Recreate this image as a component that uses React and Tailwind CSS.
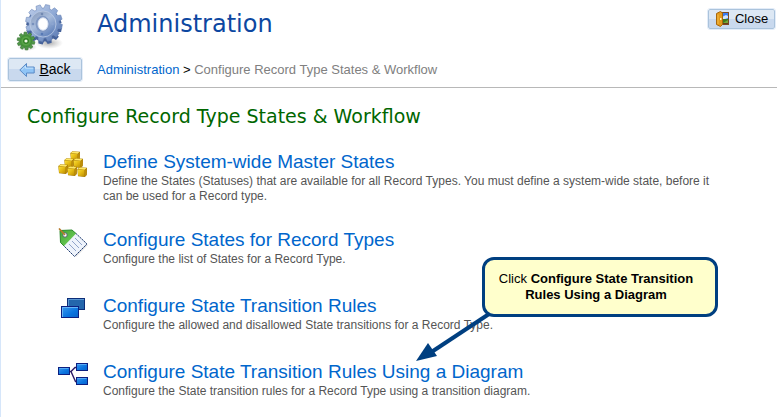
import React from 'react';

// Points of a cog outline, two for each flank of a tooth
const cogPoints = (cx, cy, outer, inner, teeth) => {
    const points = [];
    for (let i = 0; i < teeth; i++) {
        const a = (i * 2 * Math.PI) / teeth;
        const step = (2 * Math.PI) / teeth;
        [[0, inner], [0.15, outer], [0.6, outer], [0.75, inner]].forEach(([t, r]) => {
            points.push(`${(cx + r * Math.cos(a + t * step)).toFixed(1)},${(cy + r * Math.sin(a + t * step)).toFixed(1)}`);
        });
    }
    return points.join(' ');
};

const GearsIcon = () => (
    <svg width="48" height="48" viewBox="0 0 48 48" aria-hidden="true">
        <defs>
            <linearGradient id="gearBlue" x1="0" y1="0" x2="1" y2="1">
                <stop offset="0" stopColor="#c3d2ec" />
                <stop offset="0.5" stopColor="#8fa9d5" />
                <stop offset="1" stopColor="#5373ae" />
            </linearGradient>
            <linearGradient id="gearFace" x1="0" y1="0" x2="0.7" y2="1">
                <stop offset="0" stopColor="#8497b8" />
                <stop offset="0.5" stopColor="#a9bddc" />
                <stop offset="1" stopColor="#5f80ba" />
            </linearGradient>
            <radialGradient id="gearGreen">
                <stop offset="0" stopColor="#8fce74" />
                <stop offset="1" stopColor="#3a8a30" />
            </radialGradient>
            <radialGradient id="gearShadow">
                <stop offset="0" stopColor="#777" stopOpacity="0.6" />
                <stop offset="1" stopColor="#999" stopOpacity="0" />
            </radialGradient>
        </defs>
        <ellipse cx="34" cy="39" rx="14" ry="6" fill="url(#gearShadow)" />
        <ellipse cx="12" cy="43" rx="10" ry="4" fill="url(#gearShadow)" />
        <polygon points={cogPoints(29, 21, 18, 15, 12)} transform="translate(0 1.5)" fill="#46639b" />
        <polygon points={cogPoints(29, 19, 18.5, 15, 12)} fill="url(#gearBlue)" stroke="#7089b8" strokeWidth="0.6" />
        <circle cx="28" cy="20" r="13" fill="url(#gearFace)" stroke="#bccbe5" strokeWidth="0.8" />
        <ellipse cx="27.5" cy="20" rx="7" ry="8.2" fill="#8098c3" />
        <ellipse cx="28" cy="20" rx="5" ry="6.2" fill="#fff" stroke="#dbe4f3" />
        <circle cx="27" cy="10" r="1.3" fill="#7189b2" />
        <circle cx="37.5" cy="20" r="1.3" fill="#8ca5d0" />
        <circle cx="27" cy="30" r="1.3" fill="#5779b5" />
        <circle cx="18" cy="20" r="1.3" fill="#7891bd" />
        <polygon points={cogPoints(11, 37, 9, 6.8, 10)} fill="#51964a" stroke="#35722f" strokeWidth="0.6" />
        <circle cx="11" cy="37" r="6" fill="url(#gearGreen)" />
        <circle cx="11" cy="37" r="3" fill="#318026" />
        <circle cx="11" cy="37" r="1.6" fill="#f2fbe9" />
    </svg>
);

const BackIcon = () => (
    <svg width="16" height="16" viewBox="0 0 16 16" aria-hidden="true">
        <path d="M0.8 8 L7.5 1.5 V5 H15.2 V11 H7.5 V14.5 Z" fill="#8fc4f6" stroke="#5a8ac6" strokeLinejoin="round" />
        <path d="M2.6 8 L6.5 4 V6.2 H14.2" fill="none" stroke="#c4e2fc" />
    </svg>
);

const DoorIcon = () => (
    <svg width="16" height="16" viewBox="0 0 16 16" aria-hidden="true">
        <rect x="6.5" y="1.5" width="7" height="12" fill="#6b3b1a" stroke="#7c4a22" />
        <rect x="7" y="2" width="6" height="6" fill="#3b7df0" />
        <path d="M7 6 L11 4 L13 5 V7 L10 8 H7 Z" fill="#cfe4fb" />
        <rect x="7" y="8" width="6" height="4" fill="#3f7a1d" />
        <path d="M8 12 L13 9 V12 Z" fill="#75a838" />
        <path d="M1.5 2.5 L5.5 0.5 L7.5 2 V13.5 L5.5 15.5 L1.5 13.5 Z" fill="#e39a1b" stroke="#a8670d" />
        <path d="M3 3.5 V13" stroke="#f3bd4d" />
        <rect x="5" y="7" width="1.5" height="2" fill="#fff2c0" />
    </svg>
);

const Cube = ({ x, y }) => (
    <g transform={`translate(${x} ${y})`}>
        <path d="M0.3 2 L2.5 0.3 L10 0.8 L9.8 8 L7.8 10 L1 9.2 Z" fill="#a87c08" />
        <path d="M0.8 2 L2.8 0.6 L9.4 1.1 L7.6 2.7 Z" fill="#ffe866" />
        <path d="M0.6 2.4 L7.5 3 L7.5 9.5 L1.2 8.8 Z" fill="url(#cubeFace)" />
        <path d="M8 3 L9.7 1.5 L9.5 7.8 L8 9.4 Z" fill="#bd8d0a" />
    </g>
);

const CubesIcon = () => (
    <svg width="32" height="32" viewBox="0 0 32 32" aria-hidden="true">
        <defs>
            <linearGradient id="cubeFace" x1="0" y1="0" x2="1" y2="1">
                <stop offset="0" stopColor="#fbe03a" />
                <stop offset="0.5" stopColor="#e3b913" />
                <stop offset="1" stopColor="#bb8c00" />
            </linearGradient>
        </defs>
        <Cube x={13} y={1} />
        <Cube x={7} y={8} />
        <Cube x={16} y={8} />
        <Cube x={1} y={14} />
        <Cube x={10} y={16} />
        <Cube x={20} y={17} />
    </svg>
);

const TagIcon = () => (
    <svg width="32" height="32" viewBox="0 1 32 32" aria-hidden="true">
        <defs>
            <linearGradient id="tagGreen" x1="0" y1="0" x2="1" y2="1">
                <stop offset="0" stopColor="#3fa535" />
                <stop offset="1" stopColor="#79d45d" />
            </linearGradient>
        </defs>
        <path d="M8 20 L19 30 L31 18 L28 16 Z" fill="#000" opacity="0.12" />
        <path d="M3 3.5 L15 3 L30 17 L17.5 29.5 L3.5 15.5 Z" fill="#eef3fb" />
        <path d="M3 3.5 L15 3 L19 6.5 L7 19 L3.5 15.5 Z" fill="url(#tagGreen)" />
        <path d="M7 19 L3.5 15.5 L3 3.5 L15 3 L19 6.5" fill="none" stroke="#2c8a2c" />
        <path d="M19 6.5 L30 17 L17.5 29.5 L7 19" fill="none" stroke="#1f3b70" strokeDasharray="2 0.6" />
        <path d="M12 17 L19 24 M15 14 L22 21 M18 11 L25 18" stroke="#8fa3c9" />
        <circle cx="8" cy="8" r="2.2" fill="#fff" stroke="#55606e" />
        <path d="M2 1.5 L8 8" stroke="#b5782a" strokeWidth="1.6" />
    </svg>
);

const BlueGradient = ({ id }) => (
    <defs>
        <linearGradient id={id} x1="0" y1="0" x2="1" y2="1">
            <stop offset="0" stopColor="#3f9bee" />
            <stop offset="0.6" stopColor="#0a74e0" />
            <stop offset="1" stopColor="#0a62c8" />
        </linearGradient>
    </defs>
);

const WindowsIcon = () => (
    <svg width="32" height="32" viewBox="0 2 32 32" aria-hidden="true">
        <BlueGradient id="windowBlue" />
        <rect x="10.5" y="6.5" width="17" height="11" fill="#2466ac" stroke="#0c2d78" />
        <path d="M11.5 17 V7.5 H27" fill="none" stroke="#5c97d2" />
        <rect x="4.5" y="14.5" width="17" height="11" fill="url(#windowBlue)" stroke="#0c1f80" />
        <path d="M5.5 25 V15.5 H21" fill="none" stroke="#69b4f5" />
    </svg>
);

const DiagramIcon = () => (
    <svg width="32" height="32" viewBox="0 2 32 32" aria-hidden="true">
        <BlueGradient id="nodeBlue" />
        <path d="M12 13.5 H14 L18 9.5 H20 M14 13.5 L18.5 23.5 H20" fill="none" stroke="#2a1a66" strokeWidth="1.4" />
        {[[1.5, 9.5], [19.5, 5.5], [19.5, 19.5]].map(([x, y]) => (
            <g key={`${x}-${y}`}>
                <rect x={x} y={y} width="11" height="7" fill="url(#nodeBlue)" stroke="#0c1f80" />
                <path d={`M${x + 1} ${y + 1} H${x + 10}`} stroke="#58aaf4" />
            </g>
        ))}
    </svg>
);

const items = [
    {
        title: 'Define System-wide Master States',
        text: 'Define the States (Statuses) that are available for all Record Types. You must define a system-wide state, before it can be used for a Record type.',
        Icon: CubesIcon
    },
    {
        title: 'Configure States for Record Types',
        text: 'Configure the list of States for a Record Type.',
        Icon: TagIcon
    },
    {
        title: 'Configure State Transition Rules',
        text: 'Configure the allowed and disallowed State transitions for a Record Type.',
        Icon: WindowsIcon
    },
    {
        title: 'Configure State Transition Rules Using a Diagram',
        text: 'Configure the State transition rules for a Record Type using a transition diagram.',
        Icon: DiagramIcon
    }
];

const buttonStyle = 'flex items-center justify-center rounded-xs border border-[#aac3dc] bg-linear-to-b from-[#dde8f4] from-50% to-[#c9d9ee] to-50% text-black outline outline-[#e3ecf8]';

const Callout = () => (
    <div className="absolute top-[257px] left-[481px] w-[236px]">
        <svg className="absolute top-[54px] -left-[68px]" width="80" height="52" viewBox="0 0 80 52" aria-hidden="true">
            <path d="M75 3 L16 42" stroke="#003f80" strokeWidth="4" />
            <path d="M2 50 L14 32 L23 45 Z" fill="#003f80" />
        </svg>
        <div className="relative rounded-xl border-3 border-[#003f80] bg-[#ffffcc] py-[11px] pr-4 pl-2 text-center text-[13px] leading-4 text-black">
            Click <b>Configure State Transition <br />Rules Using a Diagram</b>
        </div>
    </div>
);

const App = () => {
    return (
        <div className="relative min-h-screen border-l border-[#d6e6fa] bg-white font-['Liberation_Sans',Arial,sans-serif]">
            <header className="mr-0.5 border-b border-[#b8b8b8] pb-1.5">
                <div className="flex h-[58px] items-start pt-1 pr-0.5 pl-3.5">
                    <GearsIcon />
                    <h1 className="ml-[34px] grow pt-1 font-['DejaVu_Sans',Verdana,sans-serif] text-[24px] leading-8 text-[#0d47a1]">Administration</h1>
                    <button type="button" className={`${buttonStyle} mt-[5px] h-5 w-[67px] gap-1 text-[13px]`}>
                        <DoorIcon />
                        Close
                    </button>
                </div>
                <div className="flex items-center pl-[7px]">
                    <button type="button" className={`${buttonStyle} h-[23px] w-[74px] gap-1 text-[14px]`}>
                        <BackIcon />
                        <span><u>B</u>ack</span>
                    </button>
                    <nav className="ml-[15px] text-[13px] text-[#808080]">
                        <a href="#administration" className="text-[#0066cc]">Administration</a>
                        <span className="text-black"> &gt; </span>
                        Configure Record Type States &amp; Workflow
                    </nav>
                </div>
            </header>

            <main className="pt-4 pr-12 pl-[26px]">
                <h2 className="font-['DejaVu_Sans',Verdana,sans-serif] text-[19px] leading-6 text-[#006600]">
                    Configure Record Type States &amp; Workflow
                </h2>
                <ul className="mt-[22px] flex flex-col gap-6 pl-[30px]">
                    {items.map(({ title, text, Icon }) => (
                        <li key={title} className="flex min-h-[42px] items-start gap-3.5">
                            <span className="shrink-0"><Icon /></span>
                            <div>
                                <a href="#configure" className="block text-[19px] leading-6 text-[#0066cc]">{title}</a>
                                <p className="text-[12px] leading-[15px] text-[#555555]">{text}</p>
                            </div>
                        </li>
                    ))}
                </ul>
            </main>

            <Callout />
        </div>
    );
};

export default App;
